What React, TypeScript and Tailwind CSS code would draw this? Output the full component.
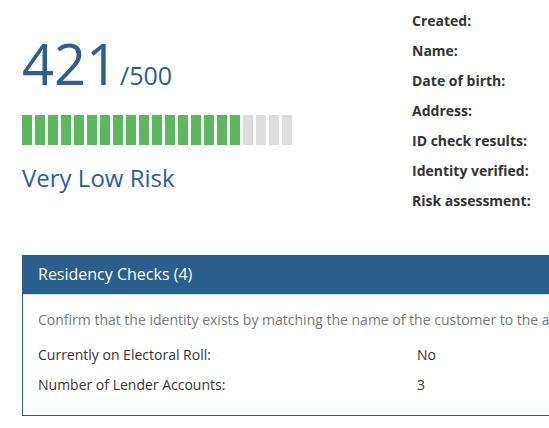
const segments = Array.from({ length: 21 }, (_, i) => i < 17);

const details = [
  "Created:",
  "Name:",
  "Date of birth:",
  "Address:",
  "ID check results:",
  "Identity verified:",
  "Risk assessment:",
];

const checks = [
  { label: "Currently on Electoral Roll:", value: "No" },
  { label: "Number of Lender Accounts:", value: "3" },
];

const App = () => {
  return (
    <div className="w-[549px] h-[428px] overflow-hidden bg-white font-['Open_Sans',sans-serif]">
      <div className="flex h-[215px]">
        <div className="w-[390px] pl-[22px] pt-[35px]">
          <div className="flex items-baseline text-[#2b5f8e]">
            <span className="text-[56px] leading-[56px]">421</span>
            <span className="ml-[2px] text-[25px] leading-[26px]">/500</span>
          </div>
          <div className="mt-[24px] flex gap-[3px]">
            {segments.map((on, i) => (
              <div
                key={i}
                className={on ? "h-[30px] w-[10px] bg-[#5cb85c]" : "h-[30px] w-[10px] bg-[#dddddd]"}
              />
            ))}
          </div>
          <div className="mt-[17px] text-[24px] leading-[32px] text-[#2b5f8e]">
            Very Low Risk
          </div>
        </div>
        <div className="pl-[22px] pt-[5px]">
          {details.map((d) => (
            <div key={d} className="flex h-[30px] items-center text-[14px] font-bold text-[#333333]">
              {d}
            </div>
          ))}
        </div>
      </div>

      <div className="ml-[22px] mt-[40px] w-[620px] border border-[#2a5e8c]">
        <div className="h-[39px] border-b border-[#dddddd] bg-[#2a5e8c] px-[15px] pt-[7px] text-[16px] leading-[22px] text-white">
          Residency Checks (4)
        </div>
        <div className="px-[15px] pt-[15px] pb-[20px] text-[14px] leading-[20px]">
          <p className="whitespace-nowrap text-[#777777]">
            Confirm that the identity exists by matching the name of the customer to the address provided.
          </p>
          <div className="mt-[15px] flex flex-col gap-[10px] text-[#333333]">
            {checks.map((c) => (
              <div key={c.label} className="grid grid-cols-[379px_1fr]">
                <span>{c.label}</span>
                <span>{c.value}</span>
              </div>
            ))}
          </div>
        </div>
      </div>
    </div>
  );
};

export default App;
